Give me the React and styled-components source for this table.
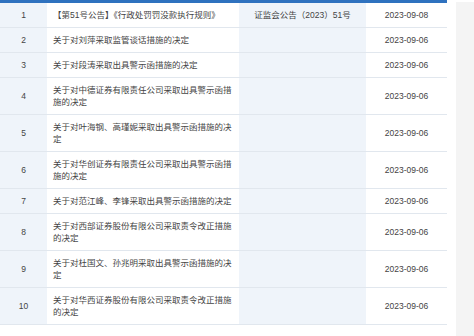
import styled, { createGlobalStyle } from "styled-components";

const GlobalStyle = createGlobalStyle`
  html, body {
    margin: 0;
    padding: 0;
    background: #ffffff;
  }
  body {
    font-family: "Liberation Sans", "Noto Sans CJK SC", sans-serif;
  }
`;

const Page = styled.div`
  display: flex;
  align-items: flex-start;
  gap: 9px;
  width: 474px;
  height: 336px;
  overflow: hidden;
`;

const Table = styled.table`
  width: 447px;
  flex: none;
  border-collapse: collapse;
  table-layout: fixed;
  border-top: 3px solid #2f72bf;
  font-size: 8.5px;
  line-height: 12px;
  color: #444;
`;

const Col = styled.col`
  width: ${({ $w }) => $w}px;
`;

const Cell = styled.td`
  padding: 6px 6px;
  border-bottom: 1px solid #e1e7ee;
  vertical-align: middle;
  text-align: center;
  background: ${({ $tint }) => ($tint ? "#eff4fa" : "#ffffff")};
`;

const TitleCell = styled(Cell)`
  text-align: left;
`;

const Aside = styled.div`
  flex: 1;
  margin-top: 2px;
  height: 334px;
  background: #f4f4f4;
`;

const rows = [
  { title: "【第51号公告】《行政处罚罚没款执行规则》", doc: "证监会公告（2023）51号", date: "2023-09-08" },
  { title: "关于对刘萍采取监管谈话措施的决定", doc: "", date: "2023-09-06" },
  { title: "关于对段涛采取出具警示函措施的决定", doc: "", date: "2023-09-06" },
  { title: "关于对中德证券有限责任公司采取出具警示函措施的决定", doc: "", date: "2023-09-06" },
  { title: "关于对叶海钢、高瑾妮采取出具警示函措施的决定", doc: "", date: "2023-09-06" },
  { title: "关于对华创证券有限责任公司采取出具警示函措施的决定", doc: "", date: "2023-09-06" },
  { title: "关于对范江峰、李锋采取出具警示函措施的决定", doc: "", date: "2023-09-06" },
  { title: "关于对西部证券股份有限公司采取责令改正措施的决定", doc: "", date: "2023-09-06" },
  { title: "关于对杜国文、孙兆明采取出具警示函措施的决定", doc: "", date: "2023-09-06" },
  { title: "关于对华西证券股份有限公司采取责令改正措施的决定", doc: "", date: "2023-09-06" },
];

export default function App() {
  return (
    <>
      <GlobalStyle />
      <Page>
        <Table>
          <colgroup>
            <Col $w={47} />
            <Col $w={192} />
            <Col $w={127} />
            <Col $w={81} />
          </colgroup>
          <tbody>
            {rows.map((row, i) => (
              <tr key={i}>
                <Cell $tint>{i + 1}</Cell>
                <TitleCell>{row.title}</TitleCell>
                <Cell $tint>{row.doc}</Cell>
                <Cell>{row.date}</Cell>
              </tr>
            ))}
          </tbody>
        </Table>
        <Aside />
      </Page>
    </>
  );
}
